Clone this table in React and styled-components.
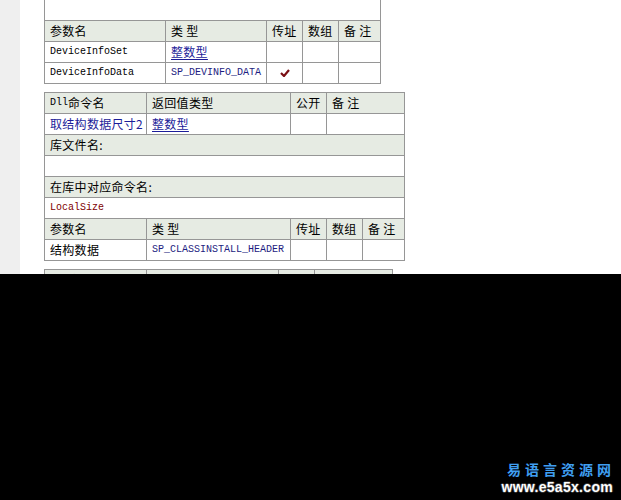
import React from "react";
import styled, { createGlobalStyle } from "styled-components";

let Global = createGlobalStyle`
  html, body {
    margin: 0;
    padding: 0;
    background: #000000;
  }
  body {
    font-family: "Noto Sans CJK SC", "Liberation Sans", sans-serif;
    font-size: 12px;
    color: #000000;
  }
`;

let Page = styled.div`
  width: 621px;
  height: 500px;
  display: flex;
  flex-direction: column;
  overflow: hidden;
`;

let Shot = styled.div`
  height: 274px;
  display: flex;
  background: #ffffff;
  overflow: hidden;
  flex-shrink: 0;
`;

let Strip = styled.div`
  width: 20px;
  background: #efefef;
  flex-shrink: 0;
`;

let Content = styled.div`
  padding-left: 24px;
  display: flex;
  flex-direction: column;
  gap: 8px;
  margin-top: -1px;
`;

let Table = styled.div`
  border-left: 1px solid #969696;
  border-top: 1px solid #969696;
  width: fit-content;
`;

let Row = styled.div`
  display: flex;
`;

let Cell = styled.div`
  box-sizing: border-box;
  width: ${p => p.$w}px;
  height: 21px;
  border-right: 1px solid #969696;
  border-bottom: 1px solid #969696;
  background: ${p => (p.$head ? "#e6ebe3" : "#ffffff")};
  padding: 0 5px;
  display: flex;
  align-items: center;
  justify-content: ${p => (p.$center ? "center" : "flex-start")};
  white-space: nowrap;
  line-height: 1;
  letter-spacing: 0.3px;
`;

let Link = styled.span`
  color: #1c1c99;
  text-decoration: underline;
  text-underline-offset: 2px;
`;

let Code = styled.span`
  font-family: "Liberation Mono", "DejaVu Sans Mono", monospace;
  font-size: 10px;
  letter-spacing: 0;
  color: ${p => p.$color || "#000000"};
`;

let Footer = styled.div`
  flex: 1;
  background: #000000;
  display: flex;
  flex-direction: column;
  align-items: flex-end;
  justify-content: flex-end;
  padding: 0 8px 5px 0;
`;

let Brand = styled.div`
  color: #3f9ef0;
  font-family: "Noto Sans CJK SC", sans-serif;
  font-size: 14px;
  font-weight: bold;
  letter-spacing: 4px;
  margin-right: -2px;
`;

let Site = styled.div`
  color: #ffffff;
  font-family: "Liberation Sans", sans-serif;
  font-weight: bold;
  font-size: 14px;
  letter-spacing: 0.3px;
  text-shadow: -1px 0 #333, 1px 0 #333, 0 -1px #333, 0 1px #333;
`;

function Check() {
  return (
    <svg width="10" height="8" viewBox="0 0 10 8">
      <path d="M1 4 L4 7 L9 1" stroke="#7a0f14" strokeWidth="2.2" fill="none" />
    </svg>
  );
}

let p1 = [121, 101, 36, 36, 42];
let p2 = [102, 144, 36, 36, 42];
let d2 = [102, 144, 36, 78];
let d3 = [102, 132, 36, 78];

function ParamHead({ w }) {
  return (
    <Row>
      <Cell $w={w[0]} $head>参数名</Cell>
      <Cell $w={w[1]} $head>类 型</Cell>
      <Cell $w={w[2]} $head>传址</Cell>
      <Cell $w={w[3]} $head>数组</Cell>
      <Cell $w={w[4]} $head>备 注</Cell>
    </Row>
  );
}

function DllHead({ w }) {
  return (
    <Row>
      <Cell $w={w[0]} $head><Code>Dll</Code>命令名</Cell>
      <Cell $w={w[1]} $head>返回值类型</Cell>
      <Cell $w={w[2]} $head>公开</Cell>
      <Cell $w={w[3]} $head>备 注</Cell>
    </Row>
  );
}

export default function App() {
  return (
    <Page>
      <Global />
      <Shot>
        <Strip />
        <Content>
          <Table>
            <Row>
              <Cell $w={336} />
            </Row>
            <ParamHead w={p1} />
            <Row>
              <Cell $w={p1[0]}><Code>DeviceInfoSet</Code></Cell>
              <Cell $w={p1[1]}><Link>整数型</Link></Cell>
              <Cell $w={p1[2]} />
              <Cell $w={p1[3]} />
              <Cell $w={p1[4]} />
            </Row>
            <Row>
              <Cell $w={p1[0]}><Code>DeviceInfoData</Code></Cell>
              <Cell $w={p1[1]}><Code $color="#1c1c80">SP_DEVINFO_DATA</Code></Cell>
              <Cell $w={p1[2]} $center><Check /></Cell>
              <Cell $w={p1[3]} />
              <Cell $w={p1[4]} />
            </Row>
          </Table>

          <Table>
            <DllHead w={d2} />
            <Row>
              <Cell $w={d2[0]}><span style={{ color: "#1c1c99" }}>取结构数据尺寸2</span></Cell>
              <Cell $w={d2[1]}><Link>整数型</Link></Cell>
              <Cell $w={d2[2]} />
              <Cell $w={d2[3]} />
            </Row>
            <Row>
              <Cell $w={360} $head>库文件名:</Cell>
            </Row>
            <Row>
              <Cell $w={360} />
            </Row>
            <Row>
              <Cell $w={360} $head>在库中对应命令名:</Cell>
            </Row>
            <Row>
              <Cell $w={360}><Code $color="#800000">LocalSize</Code></Cell>
            </Row>
            <ParamHead w={p2} />
            <Row>
              <Cell $w={p2[0]}>结构数据</Cell>
              <Cell $w={p2[1]}><Code $color="#1c1c80">SP_CLASSINSTALL_HEADER</Code></Cell>
              <Cell $w={p2[2]} />
              <Cell $w={p2[3]} />
              <Cell $w={p2[4]} />
            </Row>
          </Table>

          <Table>
            <DllHead w={d3} />
          </Table>
        </Content>
      </Shot>
      <Footer>
        <Brand>易语言资源网</Brand>
        <Site>www.e5a5x.com</Site>
      </Footer>
    </Page>
  );
}
